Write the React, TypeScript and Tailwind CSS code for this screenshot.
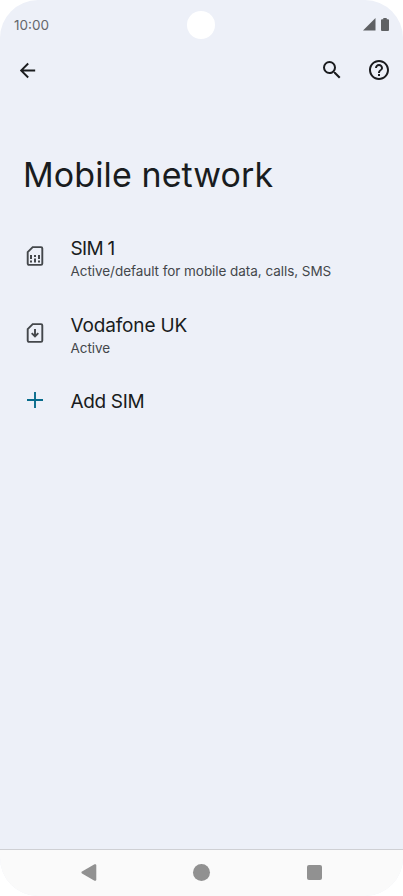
import type React from "react"
import { MdArrowBack, MdHelpOutline, MdSearch } from "react-icons/md"

interface NetworkRowProps {
  icon: React.ReactNode
  title: string
  summary?: string
  titleClass: string
}

const SimOutline = ({ children }: { children: React.ReactNode }) => (
  <svg width="24" height="24" viewBox="0 0 24 24" fill="none" stroke="#44474b" strokeWidth="1.9">
    <path d="M9.7 3.1H18a1.3 1.3 0 0 1 1.3 1.3v15.2a1.3 1.3 0 0 1-1.3 1.3H6a1.3 1.3 0 0 1-1.3-1.3V8.1z" />
    {children}
  </svg>
)

const SimIcon = () => (
  <SimOutline>
    <path stroke="none" fill="#44474b" d="M7 11h2v4H7zM7 16.5h2v2H7zM11 11h2v2h-2zM11 14.5h2v4h-2zM15 11h2v4h-2zM15 16.5h2v2h-2z" />
  </SimOutline>
)

const SimDownloadIcon = () => (
  <SimOutline>
    <path d="M12 8v7.5M8.7 12.2l3.3 3.3 3.3-3.3" />
  </SimOutline>
)

const AddIcon = () => (
  <svg width="24" height="24" viewBox="0 0 24 24" fill="none" stroke="#086b8b" strokeWidth="1.9">
    <path d="M12 4v16M4 12h16" />
  </svg>
)

const NetworkRow: React.FC<NetworkRowProps> = ({ icon, title, summary, titleClass }) => (
  <li className={`flex items-center gap-[23.5px] pl-[23px] ${summary ? "pb-8" : "-mt-[2px]"}`}>
    <span className={`shrink-0 ${summary ? "pb-[5px]" : "pb-[2px]"}`}>{icon}</span>
    <div className="whitespace-nowrap">
      <div className={`text-[19px] leading-[25px] text-[#191c20] ${titleClass}`}>{title}</div>
      {summary && (
        <div className="text-[13.5px] leading-[20px] tracking-[-0.05px] text-[#44474b]">{summary}</div>
      )}
    </div>
  </li>
)

const StatusBar = () => (
  <div className="relative flex h-[50px] items-center justify-between pl-[14px] pr-[14px]">
    <span className="text-[13.5px] text-[#65676b]">10:00</span>
    <div className="absolute left-[187px] top-[11px] size-7 rounded-full bg-white" />
    <div className="flex items-center gap-[5px] pb-[2px]">
      <svg width="13" height="13" viewBox="0 0 13 13" fill="#5f6164">
        <path d="M12.5 0v12.5H0z" />
      </svg>
      <svg width="8" height="13" viewBox="0 0 8 13" fill="#5f6164">
        <path d="M2.3 0h3.4v1.2H7a1 1 0 0 1 1 1V12a1 1 0 0 1-1 1H1a1 1 0 0 1-1-1V2.2a1 1 0 0 1 1-1h1.3z" />
      </svg>
    </div>
  </div>
)

const NavigationBar = () => (
  <nav className="flex h-[47px] items-center border-t border-[#cfd0d4] bg-[#fafafa] pb-[2px] pl-[81px]">
    <svg width="16" height="17" viewBox="0 0 16 17" fill="#919191">
      <path d="M13.5.3 1 7.6a1 1 0 0 0 0 1.8l12.5 7.3a1.2 1.2 0 0 0 1.8-1V1.3a1.2 1.2 0 0 0-1.8-1z" />
    </svg>
    <div className="ml-[96px] size-[17px] rounded-full bg-[#919191]" />
    <div className="ml-[97px] size-[15px] rounded-[2px] bg-[#919191]" />
  </nav>
)

export default function App() {
  return (
    <div className="h-[896px] w-[403px] bg-white font-['Inter',sans-serif]">
      <div className="flex h-full flex-col overflow-hidden rounded-[38px] bg-[#edf0f8]">
        <StatusBar />

        <header className="flex h-10 items-center pl-4 text-[#1b1c1f]">
          <button aria-label="Back">
            <MdArrowBack size={23} />
          </button>
          <button aria-label="Search" className="ml-auto">
            <MdSearch size={24} />
          </button>
          <button aria-label="Help" className="ml-[23px] mr-3">
            <MdHelpOutline size={24} />
          </button>
        </header>

        <h1 className="mt-[63px] whitespace-nowrap pl-[23px] text-[34px] leading-[44px] tracking-[0.1px] text-[#191c20]">
          Mobile network
        </h1>

        <ul className="mt-[39px] flex flex-col">
          <NetworkRow
            icon={<SimIcon />}
            title="SIM 1"
            summary="Active/default for mobile data, calls, SMS"
            titleClass="tracking-[-0.7px]"
          />
          <NetworkRow
            icon={<SimDownloadIcon />}
            title="Vodafone UK"
            summary="Active"
            titleClass="tracking-[-0.15px]"
          />
          <NetworkRow icon={<AddIcon />} title="Add SIM" titleClass="tracking-[-0.35px]" />
        </ul>

        <div className="flex-1" />
        <NavigationBar />
      </div>
    </div>
  )
}
